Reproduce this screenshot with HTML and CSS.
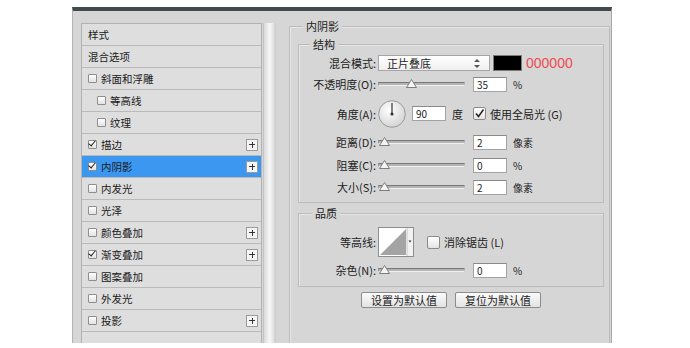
FILE: index.html
```html
<!DOCTYPE html>
<html lang="zh-CN">
<head>
  <meta charset="UTF-8" />
  <title>图层样式</title>
  <link rel="stylesheet" href="styles.css">
</head>
<body>
  <div class="dialog">
    <div class="styles-col">
      <ul class="style-list">
        <li class="item">样式</li>
        <li class="item">混合选项</li>
        <li class="item"><span class="cb"></span>斜面和浮雕</li>
        <li class="item sub"><span class="cb"></span>等高线</li>
        <li class="item sub"><span class="cb"></span>纹理</li>
        <li class="item"><span class="cb on"></span>描边<span class="plus"></span></li>
        <li class="item active"><span class="cb on"></span>内阴影<span class="plus"></span></li>
        <li class="item"><span class="cb"></span>内发光</li>
        <li class="item"><span class="cb"></span>光泽</li>
        <li class="item"><span class="cb"></span>颜色叠加<span class="plus"></span></li>
        <li class="item"><span class="cb on"></span>渐变叠加<span class="plus"></span></li>
        <li class="item"><span class="cb"></span>图案叠加</li>
        <li class="item"><span class="cb"></span>外发光</li>
        <li class="item"><span class="cb"></span>投影<span class="plus"></span></li>
        <li class="item empty"></li>
      </ul>
      <div class="scrollbar"></div>
    </div>

    <div class="settings">
      <div class="group outer">
        <span class="group-title">内阴影</span>

        <div class="group inner">
          <span class="group-title">结构</span>
          <div class="row">
            <span class="lbl">混合模式:</span>
            <div class="select">正片叠底
              <svg class="updown" width="6" height="9" viewBox="0 0 6 9"><path d="M3 0 L6 3 H0 Z M3 9 L6 6 H0 Z" fill="#555"/></svg>
            </div>
            <span class="swatch"></span>
            <span class="hex">000000</span>
          </div>
          <div class="row gap5">
            <span class="lbl">不透明度(O):</span>
            <div class="slider"><svg class="thumb" style="left: 27px" width="11" height="9" viewBox="0 0 11 9"><path d="M5.5 0.5 L10.5 8.5 H0.5 Z" fill="#f4f4f4" stroke="#7d7d7d"/></svg></div>
            <span class="num">35</span>
            <span class="unit">%</span>
          </div>
          <div class="row angle">
            <span class="lbl">角度(A):</span>
            <svg class="dial" width="28" height="28" viewBox="0 0 28 28">
              <defs>
                <radialGradient id="dg" cx="0.4" cy="0.35" r="0.7">
                  <stop offset="0" stop-color="#ffffff"/>
                  <stop offset="1" stop-color="#d2d2d2"/>
                </radialGradient>
              </defs>
              <circle cx="14" cy="14" r="13.3" fill="url(#dg)" stroke="#9a9a9a"/>
              <line x1="14" y1="14" x2="14" y2="3" stroke="#333" stroke-width="1.2"/>
              <circle cx="14" cy="14" r="1.6" fill="#333"/>
            </svg>
            <span class="num short">90</span>
            <span class="deg">度</span>
            <span class="box on"><svg width="13" height="13" viewBox="0 0 13 13"><path d="M3 6.5 L5.5 9.5 L10.5 2.5" fill="none" stroke="#222" stroke-width="1.5"/></svg></span>
            <span class="box-text">使用全局光 (G)</span>
          </div>
          <div class="row gap6">
            <span class="lbl">距离(D):</span>
            <div class="slider"><svg class="thumb" style="left: 0px" width="11" height="9" viewBox="0 0 11 9"><path d="M5.5 0.5 L10.5 8.5 H0.5 Z" fill="#f4f4f4" stroke="#7d7d7d"/></svg></div>
            <span class="num">2</span>
            <span class="unit">像素</span>
          </div>
          <div class="row gap7">
            <span class="lbl">阻塞(C):</span>
            <div class="slider"><svg class="thumb" style="left: 0px" width="11" height="9" viewBox="0 0 11 9"><path d="M5.5 0.5 L10.5 8.5 H0.5 Z" fill="#f4f4f4" stroke="#7d7d7d"/></svg></div>
            <span class="num">0</span>
            <span class="unit">%</span>
          </div>
          <div class="row gap6">
            <span class="lbl">大小(S):</span>
            <div class="slider"><svg class="thumb" style="left: 0px" width="11" height="9" viewBox="0 0 11 9"><path d="M5.5 0.5 L10.5 8.5 H0.5 Z" fill="#f4f4f4" stroke="#7d7d7d"/></svg></div>
            <span class="num">2</span>
            <span class="unit">像素</span>
          </div>
        </div>

        <div class="group inner quality">
          <span class="group-title">品质</span>
          <div class="row contour-row">
            <span class="lbl">等高线:</span>
            <svg class="contour" width="36" height="30" viewBox="0 0 36 30">
              <rect x="0.5" y="0.5" width="35" height="29" fill="#fff" stroke="#8e8e8e"/>
              <path d="M2 28 L28 2 V28 Z" fill="#a4a4a4"/>
              <rect x="29" y="1" width="6" height="28" fill="#f2f2f2"/>
              <line x1="29" y1="1" x2="29" y2="29" stroke="#c4c4c4"/>
              <path d="M30.5 13.5 H33.5 L32 15.5 Z" fill="#333"/>
            </svg>
            <span class="box aa"></span>
            <span class="box-text">消除锯齿 (L)</span>
          </div>
          <div class="row gap5">
            <span class="lbl">杂色(N):</span>
            <div class="slider"><svg class="thumb" style="left: 0px" width="11" height="9" viewBox="0 0 11 9"><path d="M5.5 0.5 L10.5 8.5 H0.5 Z" fill="#f4f4f4" stroke="#7d7d7d"/></svg></div>
            <span class="num">0</span>
            <span class="unit">%</span>
          </div>
        </div>

        <div class="buttons">
          <button>设置为默认值</button>
          <button>复位为默认值</button>
        </div>
      </div>
    </div>
  </div>
</body>
</html>
```

FILE: styles.css
```css
* {
  margin: 0;
  padding: 0;
  box-sizing: border-box;
}
body {
  background: #fff;
  font-family: "Noto Sans CJK SC", "Noto Sans", sans-serif;
  font-size: 11px;
  color: #1e1e1e;
}
.dialog {
  margin: 7px 0 0 72px;
  width: 540px;
  height: 336px;
  display: flex;
  overflow: hidden;
  background: #d6d6d6;
  border-top: 4px solid #414a4d;
  border-left: 1px solid #b3b3b3;
  border-right: 1px solid #a9a9a9;
}

/* left: style list */
.styles-col {
  display: flex;
  gap: 1px;
  padding: 12px 0 0 8px;
}
.style-list {
  width: 181px;
  list-style: none;
  background: #dedede;
  border: 1px solid #b2b2b2;
  border-bottom: none;
  font-size: 10.5px;
}
.item {
  height: 22px;
  display: flex;
  align-items: center;
  padding: 0 3px 0 6px;
  border-bottom: 1px solid #bababa;
  color: #1a1a1a;
}
.item.sub {
  padding-left: 15px;
}
.item.active {
  background: #3c97f1;
}
.item.empty {
  border-bottom: none;
}
.cb {
  position: relative;
  width: 9px;
  height: 9px;
  margin-right: 4px;
  border: 1px solid #8e8e8e;
  border-radius: 1px;
  background: linear-gradient(#ffffff, #e2e2e2);
}
.cb.on::after {
  content: "";
  position: absolute;
  left: 1px;
  top: -2px;
  width: 3px;
  height: 6px;
  border-right: 1.5px solid #222;
  border-bottom: 1.5px solid #222;
  transform: rotate(40deg);
}
.plus {
  position: relative;
  margin-left: auto;
  width: 12px;
  height: 12px;
  border: 1px solid #9a9a9a;
  background: #f5f5f5;
}
.plus::before,
.plus::after {
  content: "";
  position: absolute;
  background: #333;
}
.plus::before {
  left: 2px;
  top: 4.5px;
  width: 6px;
  height: 1.2px;
}
.plus::after {
  left: 4.5px;
  top: 2px;
  width: 1.2px;
  height: 6px;
}
.scrollbar {
  width: 13px;
  height: 340px;
  background: linear-gradient(to right, #d9d9d9, #f7f7f7 45%, #eaeaea 70%, #c9c9c9);
  border-left: 1px solid #c4c4c4;
}

/* right: settings */
.settings {
  padding: 15px 0 0 13px;
}
.group {
  position: relative;
  border: 1px solid #bcbcbc;
  box-shadow: inset 1px 1px 0 #e6e6e6;
}
.group-title {
  position: absolute;
  top: -8px;
  left: 13px;
  padding: 0 3px;
  line-height: 14px;
  background: #d6d6d6;
  color: #222;
}
.outer {
  width: 321px;
  height: 340px;
  padding: 17px 5px 0 8px;
  border-bottom: none;
}
.inner {
  width: 306px;
  padding: 10px 0 7px;
}
.inner .group-title {
  left: 11px;
}
.quality {
  margin-top: 10px;
  padding: 13px 0 8px;
}
.quality .group-title {
  left: 13px;
}
.row {
  height: 16px;
  display: flex;
  align-items: center;
}
.gap5 { margin-top: 5px; }
.gap6 { margin-top: 6px; }
.gap7 { margin-top: 7px; }
.row.angle {
  height: 29px;
  margin-top: 7px;
}
.row.contour-row {
  height: 30px;
}
.lbl {
  width: 77px;
  text-align: right;
  color: #222;
  white-space: nowrap;
}
.select {
  position: relative;
  margin-left: 2px;
  width: 112px;
  height: 16px;
  padding-left: 8px;
  line-height: 14px;
  border: 1px solid #a6a6a6;
  background: linear-gradient(#ffffff, #f0f0f0);
}
.updown {
  position: absolute;
  right: 9px;
  top: 3px;
}
.swatch {
  margin-left: 3px;
  width: 29px;
  height: 16px;
  background: #000;
  border: 1px solid #7c7c7c;
}
.hex {
  margin-left: 4px;
  font-family: "Liberation Sans", sans-serif;
  font-size: 14px;
  color: #ef4a51;
}
.slider {
  position: relative;
  margin-left: 2px;
  width: 87px;
  height: 4px;
  border-top: 1px solid #777;
  border-left: 1px solid #999;
  border-right: 1px solid #bbb;
  border-bottom: 1px solid #f0f0f0;
  background: #b4b4b4;
}
.thumb {
  position: absolute;
  top: -4px;
}
.num {
  margin-left: 8px;
  width: 34px;
  height: 15px;
  padding-left: 3px;
  line-height: 13px;
  font-size: 10px;
  background: #fff;
  border: 1px solid #a3a3a3;
  border-top-color: #8a8a8a;
}
.num.short {
  margin-left: 6px;
}
.unit {
  margin-left: 6px;
  font-size: 10px;
}
.dial {
  margin-left: 2px;
}
.deg {
  margin-left: 6px;
}
.box {
  width: 13px;
  height: 13px;
  margin-left: 10px;
  border: 1px solid #8a8a8a;
  border-radius: 2px;
  background: linear-gradient(#ffffff, #e4e4e4);
}
.box svg {
  display: block;
  margin: -1px 0 0 -1px;
}
.box.aa {
  margin-left: 13px;
}
.box-text {
  margin-left: 4px;
  color: #222;
}
.contour {
  margin-left: 2px;
}
.buttons {
  display: flex;
  justify-content: center;
  gap: 8px;
  width: 306px;
  margin-top: 5px;
}
button {
  width: 86px;
  height: 16px;
  font-family: "Noto Sans CJK SC", sans-serif;
  font-size: 11px;
  line-height: 14px;
  color: #222;
  border: 1px solid #8c8c8c;
  border-radius: 2px;
  background: linear-gradient(#fbfbfb, #e2e2e2);
}
```
